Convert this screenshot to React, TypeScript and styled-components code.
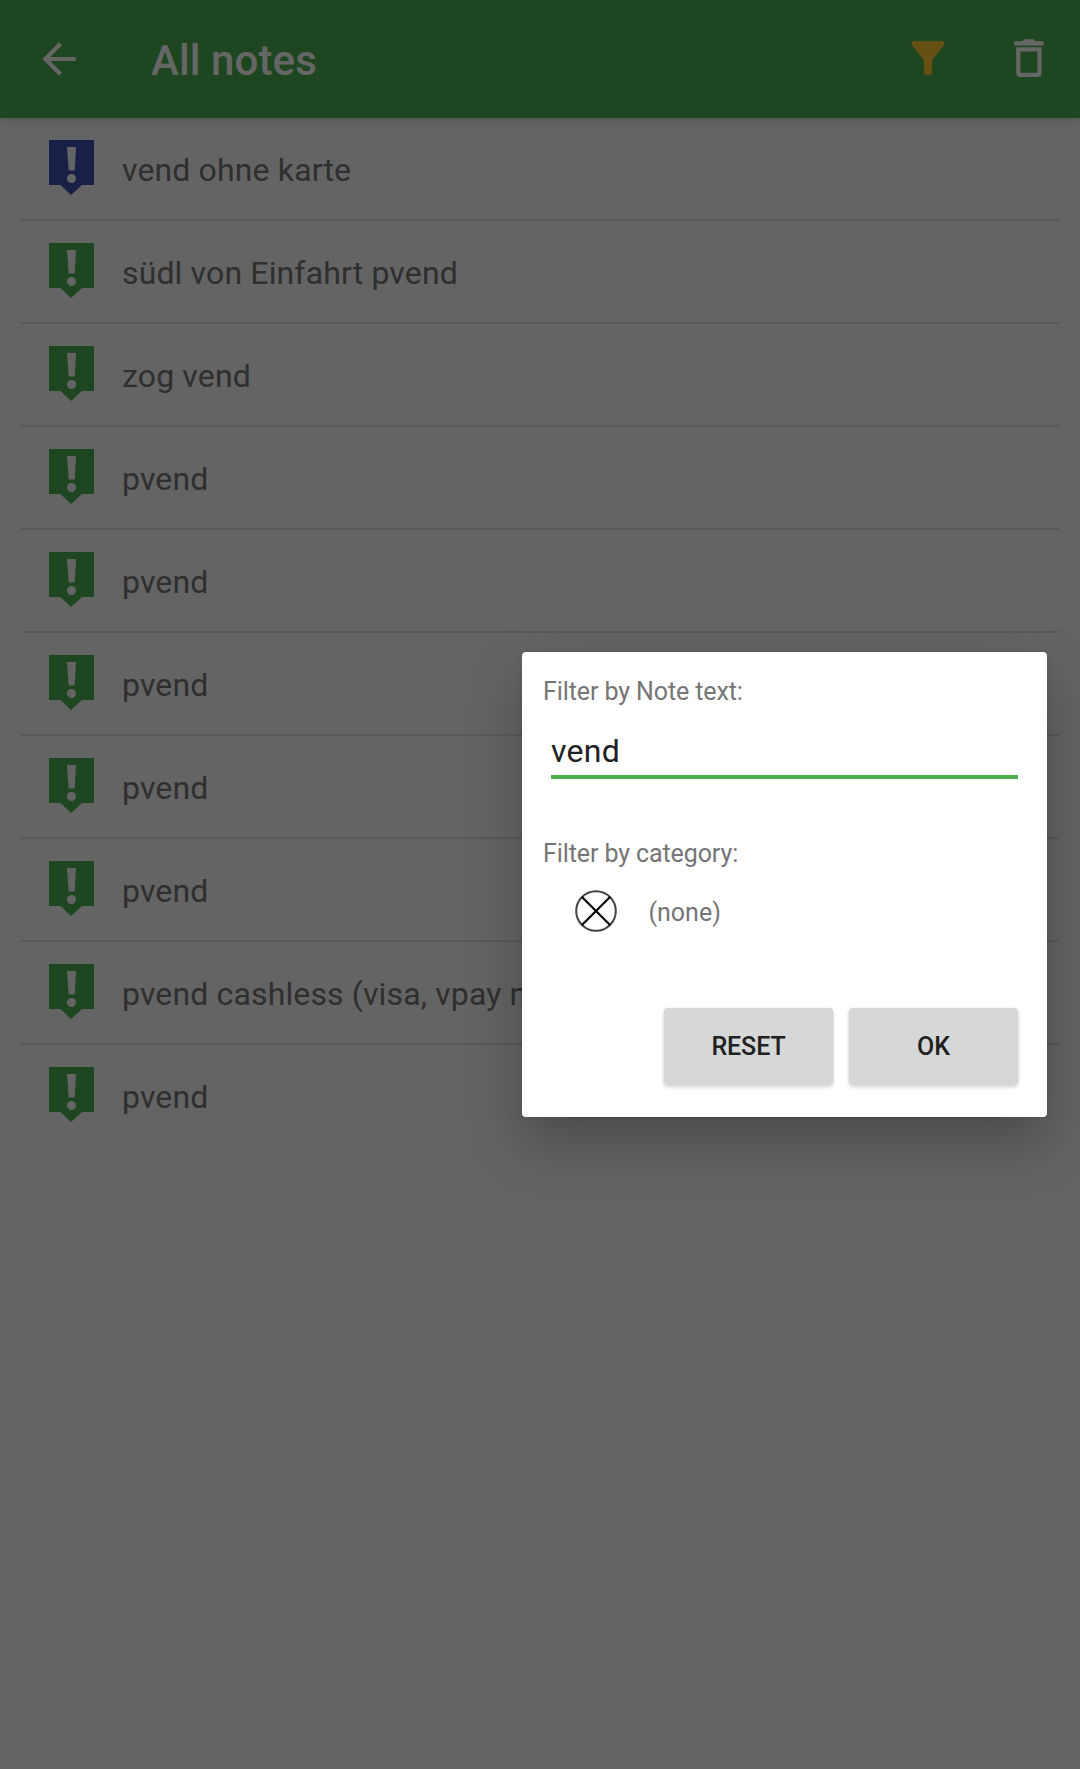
import React from "react";
import styled, { createGlobalStyle } from "styled-components";

const GlobalStyle = createGlobalStyle`
  * { box-sizing: border-box; }
  body { margin: 0; background: #fafafa; font-family: Roboto, "Liberation Sans", sans-serif; }
`;

const Screen = styled.div`
  position: relative;
  display: flex;
  flex-direction: column;
  height: 1769px;
  overflow: hidden;
  background: #fafafa;
`;

const AppBar = styled.header`
  display: flex;
  align-items: center;
  height: 118px;
  padding: 0 26px 0 34px;
  background: #4caf50;
  color: #fff;
  box-shadow: 0 2px 8px rgba(0, 0, 0, 0.18);
  z-index: 1;
`;

const IconButton = styled.button`
  display: flex;
  padding: 0;
  border: 0;
  background: none;
  color: inherit;
`;

const Title = styled.h1`
  flex: 1;
  margin: 0 0 0 67px;
  padding-top: 4px;
  font-size: 42px;
  line-height: 50px;
  font-weight: 500;
  letter-spacing: 0.1px;
`;

const Actions = styled.div`
  display: flex;
  gap: 50px;
`;

const NoteList = styled.ul`
  margin: 0;
  padding: 0 21px;
  list-style: none;
`;

const NoteRow = styled.li`
  display: flex;
  align-items: flex-start;
  gap: 28px;
  height: 103px;
  padding: 22px 0 0 28px;
  border-bottom: 2px solid #dfdfdf;
  &:last-child { border-bottom: 0; }
`;

const NoteText = styled.span`
  padding-top: 10px;
  font-size: 32px;
  line-height: 40px;
  letter-spacing: 0.14px;
  color: #757575;
  white-space: nowrap;
`;

const Scrim = styled.div`
  position: absolute;
  inset: 0;
  z-index: 2;
  background: rgba(0, 0, 0, 0.6);
`;

const Dialog = styled.section`
  position: absolute;
  z-index: 3;
  left: 522px;
  top: 652px;
  width: 525px;
  height: 465px;
  display: flex;
  flex-direction: column;
  padding: 25px 29px 33px 21px;
  border-radius: 4px;
  background: #fff;
  box-shadow: 0 26px 56px rgba(0, 0, 0, 0.25), 0 0 5px rgba(0, 0, 0, 0.08);
`;

const Label = styled.label`
  font-size: 25px;
  line-height: 30px;
  letter-spacing: -0.1px;
  color: #757575;
`;

const TextField = styled.input`
  height: 55px;
  margin: 17px 0 60px 8px;
  padding: 2px 0 0;
  border: 0;
  border-bottom: 4px solid #4caf50;
  outline: 0;
  background: none;
  font: 32px Roboto, sans-serif;
  letter-spacing: 0.3px;
  color: #212121;
`;

const CategoryRow = styled.div`
  display: flex;
  align-items: center;
  gap: 32px;
  height: 44px;
  margin: 20px 0 0 31.5px;
`;

const CategoryName = styled(Label)`
  padding-top: 4px;
  letter-spacing: 0;
`;

const ButtonBar = styled.div`
  display: flex;
  justify-content: flex-end;
  gap: 16px;
  margin-top: auto;
`;

const Button = styled.button`
  width: 169px;
  height: 76px;
  padding: 1px 0 0;
  border: 0;
  border-radius: 4px;
  background: #d6d7d7;
  box-shadow: 0 3px 4px rgba(0, 0, 0, 0.18), 0 0 2px rgba(0, 0, 0, 0.1);
  font: 500 25px Roboto, sans-serif;
  letter-spacing: -0.1px;
  color: #212121;
`;

const BackIcon = () => (
  <svg width="50" height="50" viewBox="0 0 24 24" fill="currentColor">
    <path d="M20 11H7.83l5.59-5.59L12 4l-8 8 8 8 1.41-1.41L7.83 13H20v-2z" />
  </svg>
);

const FilterIcon = () => (
  <svg width="50" height="50" viewBox="0.48 0.48 24 24" fill="#ffc933">
    <path d="M4.25 5.61C6.27 8.2 10 13 10 13v6c0 .55.45 1 1 1h2c.55 0 1-.45 1-1v-6s3.72-4.8 5.74-7.39A.998.998 0 0 0 18.95 4H5.04c-.83 0-1.3.95-.79 1.61z" />
  </svg>
);

const TrashIcon = () => (
  <svg width="50" height="50" viewBox="0 0 50 50" fill="none">
    <path d="M10.300 7.200H18l2-2h9.500l2 2h8v4.200H10.300z" fill="currentColor" />
    <path
      d="M14.300 15.400h21.200v23.500a2 2 0 0 1-2 2H16.300a2 2 0 0 1-2-2z"
      stroke="currentColor"
      strokeWidth="4.200"
    />
  </svg>
);

const NoteIcon = ({ color }: { color: string }) => (
  <svg width="45" height="55" viewBox="0 0 45 55">
    <path d="M0 0h45v45H33L22 55 11.500 45H0z" fill={color} />
    <path d="M18 7h9l-1.300 23.500h-6z" fill="#fafafa" />
    <circle cx="22.500" cy="38.500" r="4.500" fill="#fafafa" />
  </svg>
);

const NoCategoryIcon = () => (
  <svg width="42" height="42" viewBox="0 0 42 42" fill="none">
    <circle cx="21" cy="21" r="19.800" stroke="#424242" strokeWidth="2" />
    <path d="M7 7l28 28M35 7L7 35" stroke="#000" strokeWidth="2.200" />
  </svg>
);

const notes = [
  "vend ohne karte",
  "südl von Einfahrt pvend",
  "zog vend",
  "pvend",
  "pvend",
  "pvend",
  "pvend",
  "pvend",
  "pvend cashless (visa, vpay n",
  "pvend",
];

export default function App() {
  return (
    <Screen>
      <GlobalStyle />
      <AppBar>
        <IconButton aria-label="Back"><BackIcon /></IconButton>
        <Title>All notes</Title>
        <Actions>
          <IconButton aria-label="Filter"><FilterIcon /></IconButton>
          <IconButton aria-label="Delete"><TrashIcon /></IconButton>
        </Actions>
      </AppBar>
      <NoteList>
        {notes.map((text, i) => (
          <NoteRow key={i}>
            <NoteIcon color={i === 0 ? "#3f51b5" : "#4caf50"} />
            <NoteText>{text}</NoteText>
          </NoteRow>
        ))}
      </NoteList>
      <Scrim />
      <Dialog>
        <Label htmlFor="note-text">Filter by Note text:</Label>
        <TextField id="note-text" defaultValue="vend" />
        <Label as="div">Filter by category:</Label>
        <CategoryRow>
          <NoCategoryIcon />
          <CategoryName as="span">(none)</CategoryName>
        </CategoryRow>
        <ButtonBar>
          <Button>RESET</Button>
          <Button>OK</Button>
        </ButtonBar>
      </Dialog>
    </Screen>
  );
}
